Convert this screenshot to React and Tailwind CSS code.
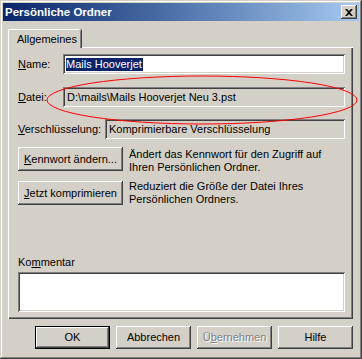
import React from 'react';

const raised =
  'shadow-[inset_-1px_-1px_0_#404040,inset_1px_1px_0_#ffffff,inset_-2px_-2px_0_#808080]';
const sunken =
  'shadow-[inset_1px_1px_0_#808080,inset_-1px_-1px_0_#ffffff,inset_2px_2px_0_#404040,inset_-2px_-2px_0_#d4d0c8]';

const Btn = ({ children, className = '', disabled = false, isDefault = false }) => (
  <div
    className={
      'flex shrink-0 items-center justify-center bg-[#d4d0c8] ' +
      (isDefault ? 'border border-black ' : '') +
      (disabled ? 'text-[#808080] [text-shadow:1px_1px_0_#ffffff] ' : 'text-black ') +
      className
    }
  >
    <div className={'flex h-full w-full items-center justify-center ' + raised}>{children}</div>
  </div>
);

export default function App() {
  return (
    <div
      className="relative h-[359px] w-[362px] overflow-hidden bg-[#d4d0c8] p-[3px] text-[11px] leading-[13px] text-black shadow-[inset_-1px_-1px_0_#404040,inset_1px_1px_0_#d4d0c8,inset_-2px_-2px_0_#808080,inset_2px_2px_0_#ffffff]"
      style={{ fontFamily: '"Liberation Sans", Arial, sans-serif' }}
    >
      {/* Titelleiste */}
      <div className="flex h-[18px] items-center justify-between bg-gradient-to-r from-[#0a246a] to-[#a6caf0] pl-[2px] pr-[2px]">
        <span className="text-[11.5px] font-bold text-white">Persönliche Ordner</span>
        <div className={'flex h-[14px] w-[16px] items-center justify-center bg-[#d4d0c8] ' + raised}>
          <svg width="8" height="7" viewBox="0 0 8 7">
            <path d="M0 0h2l2 2 2-2h2L5 3.5 8 7H6L4 5 2 7H0l3-3.5z" fill="#000" />
          </svg>
        </div>
      </div>

      <div className="ml-[5px] mr-[6px] mt-[8px]">
        {/* Reiter */}
        <div className="relative z-10 flex h-[19px] w-[73px] items-center rounded-t-[2px] border-l border-t border-white bg-[#d4d0c8] pl-[8px] shadow-[inset_-1px_0_0_#808080,1px_0_0_#404040]">
          Allgemeines
        </div>

        {/* Register-Inhalt */}
        <div className="-mt-px flex h-[272px] flex-col border-l border-t border-white bg-[#d4d0c8] pl-[9px] pr-[8px] shadow-[inset_-1px_-1px_0_#404040,inset_-2px_-2px_0_#808080]">
          <div className="mt-[6px] flex h-[20px] items-center">
            <span className="w-[45px]">
              <span className="underline">N</span>ame:
            </span>
            <div className={'flex h-[20px] flex-1 items-center bg-white pl-[3px] ' + sunken}>
              <span className="bg-[#0a246a] pr-px text-white">Mails Hooverjet</span>
            </div>
          </div>

          <div className="mt-[13px] flex h-[20px] items-center">
            <span className="w-[45px]">
              <span className="underline">D</span>atei:
            </span>
            <div className={'flex h-[20px] flex-1 items-center bg-[#d4d0c8] pl-[4px] ' + sunken}>
              D:\mails\Mails Hooverjet Neu 3.pst
            </div>
          </div>

          <div className="mt-[12px] flex h-[20px] items-center">
            <span className="w-[87px]">
              <span className="underline">V</span>erschlüsselung:
            </span>
            <div className={'flex h-[20px] flex-1 items-center bg-[#d4d0c8] pl-[4px] ' + sunken}>
              Komprimierbare Verschlüsselung
            </div>
          </div>

          <div className="mt-[8px] flex h-[24px] items-start">
            <Btn className="h-[24px] w-[105px]">
              <span>
                <span className="underline">K</span>ennwort ändern...
              </span>
            </Btn>
            <p className="ml-[6px] mt-[1px]">
              Ändert das Kennwort für den Zugriff auf
              <br />
              Ihren Persönlichen Ordner.
            </p>
          </div>

          <div className="mt-[10px] flex h-[24px] items-start">
            <Btn className="h-[24px] w-[105px]">
              <span>
                <span className="underline">J</span>etzt komprimieren
              </span>
            </Btn>
            <p className="ml-[6px] -mt-px">
              Reduziert die Größe der Datei Ihres
              <br />
              Persönlichen Ordners.
            </p>
          </div>

          <div className="mt-[51px]">
            Ko<span className="underline">m</span>mentar
          </div>
          <div className={'mt-[3px] h-[40px] bg-white ' + sunken} />
        </div>

        {/* Schaltflächen */}
        <div className="mt-[7px] flex justify-end gap-[6px]">
          <Btn isDefault className="h-[23px] w-[75px]">OK</Btn>
          <Btn className="h-[23px] w-[75px]">Abbrechen</Btn>
          <Btn disabled className="h-[23px] w-[75px]">
            <span>
              Ü<span className="underline">b</span>ernehmen
            </span>
          </Btn>
          <Btn className="h-[23px] w-[75px]">Hilfe</Btn>
        </div>
      </div>

      {/* Markierung */}
      <svg className="pointer-events-none absolute left-0 top-0" width="362" height="359">
        <ellipse cx="202" cy="100" rx="155" ry="24" fill="none" stroke="#ff0000" strokeWidth="1" />
      </svg>
    </div>
  );
}
